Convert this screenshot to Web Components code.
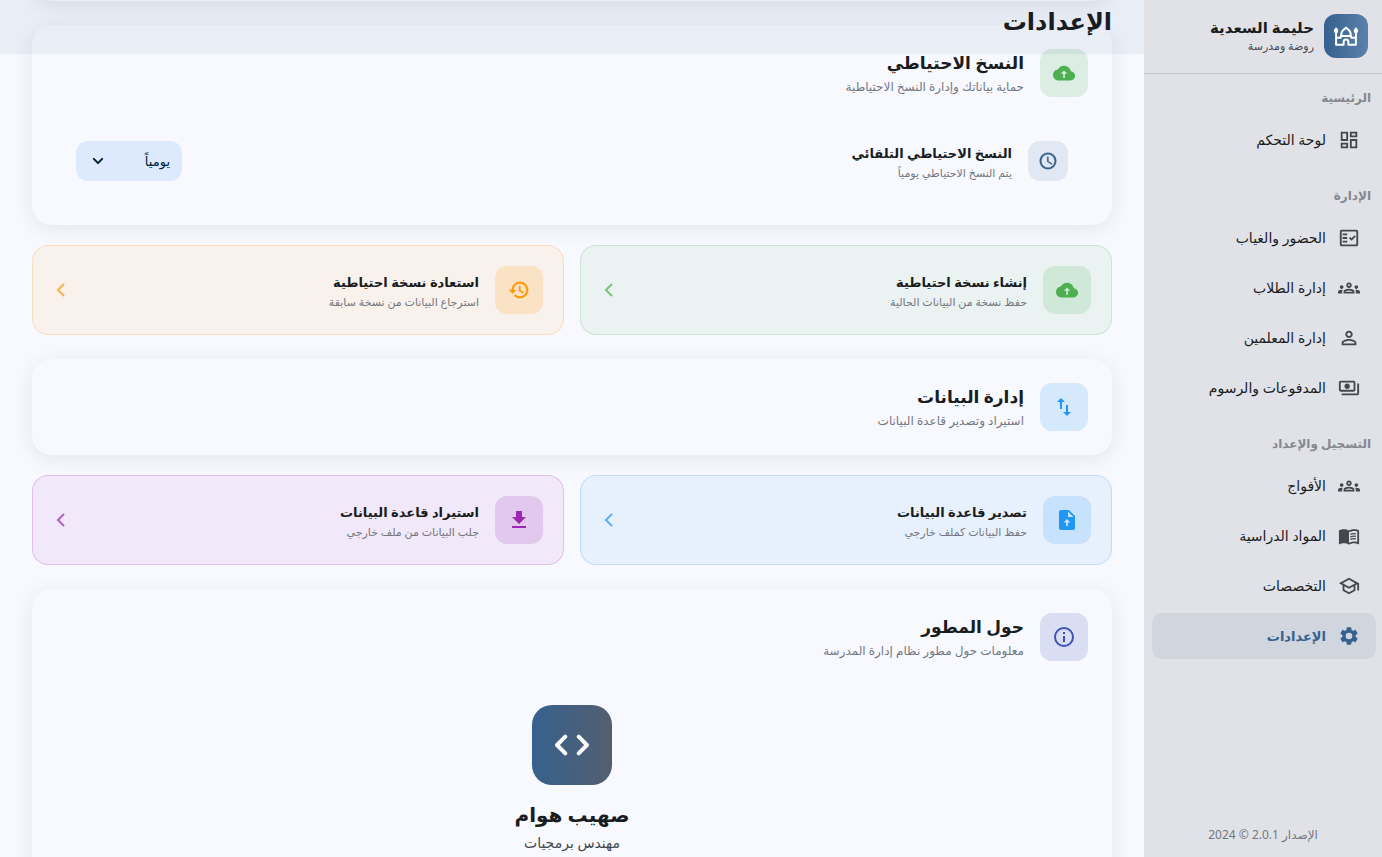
<!DOCTYPE html>
<html lang="ar" dir="rtl">
<head>
<meta charset="utf-8">
<meta name="viewport" content="width=device-width, initial-scale=1">
<title>الإعدادات</title>
<style>
  html, body { height: 100%; }
  body {
    margin: 0;
    overflow: hidden;
    background: #f8f9ff;
    color: #191c20;
    font-family: "Noto Sans", "DejaVu Sans", sans-serif;
    --primary: #36618e;
    --muted: #73777f;
    --green: #4caf50;
    --orange: #ff9800;
    --blue: #2196f3;
    --purple: #9c27b0;
    --indigo: #3f51b5;
  }
</style>
</head>
<body>

<school-app>
  <side-nav slot="side">
    <nav-group label="الرئيسية">
      <nav-item icon="dashboard">لوحة التحكم</nav-item>
    </nav-group>
    <nav-group label="الإدارة">
      <nav-item icon="check">الحضور والغياب</nav-item>
      <nav-item icon="groups">إدارة الطلاب</nav-item>
      <nav-item icon="person">إدارة المعلمين</nav-item>
      <nav-item icon="payments">المدفوعات والرسوم</nav-item>
    </nav-group>
    <nav-group label="التسجيل والإعداد">
      <nav-item icon="groups">الأفواج</nav-item>
      <nav-item icon="book">المواد الدراسية</nav-item>
      <nav-item icon="school">التخصصات</nav-item>
      <nav-item icon="settings" active>الإعدادات</nav-item>
    </nav-group>
  </side-nav>

  <page-bar slot="bar">الإعدادات</page-bar>

  <settings-card class="previous"></settings-card>

  <settings-card icon="cloud" titulo="النسخ الاحتياطي" sub="حماية بياناتك وإدارة النسخ الاحتياطية" style="--tint: var(--green)">
    <schedule-row></schedule-row>
  </settings-card>
  <action-grid>
    <action-card icon="cloud" titulo="إنشاء نسخة احتياطية" sub="حفظ نسخة من البيانات الحالية" style="--tint: var(--green)"></action-card>
    <action-card icon="history" titulo="استعادة نسخة احتياطية" sub="استرجاع البيانات من نسخة سابقة" style="--tint: var(--orange)"></action-card>
  </action-grid>

  <settings-card icon="swap" titulo="إدارة البيانات" sub="استيراد وتصدير قاعدة البيانات" style="--tint: var(--blue)"></settings-card>
  <action-grid>
    <action-card icon="upload" titulo="تصدير قاعدة البيانات" sub="حفظ البيانات كملف خارجي" style="--tint: var(--blue)"></action-card>
    <action-card icon="download" titulo="استيراد قاعدة البيانات" sub="جلب البيانات من ملف خارجي" style="--tint: var(--purple)"></action-card>
  </action-grid>

  <settings-card icon="info" titulo="حول المطور" sub="معلومات حول مطور نظام إدارة المدرسة" style="--tint: var(--indigo)">
    <developer-profile></developer-profile>
  </settings-card>
</school-app>

<script>
// all the icons use a 24x24 grid
const icons = {
  dashboard: '<path d="M19 5v2h-4V5h4M9 5v6H5V5h4m10 8v6h-4v-6h4M9 17v2H5v-2h4M21 3h-8v6h8V3zM11 3H3v10h8V3zm10 8h-8v10h8V11zm-10 4H3v6h8v-6z"/>',
  check: '<path d="M20 3H4c-1.1 0-2 .9-2 2v14c0 1.1.9 2 2 2h16c1.1 0 2-.9 2-2V5c0-1.1-.9-2-2-2zm0 16H4V5h16v14z"/><path d="M19.4 10.4 18 9l-3.2 3.2-1.4-1.4L12 12.2l2.8 2.8zM5 7h5v2H5zM5 11h5v2H5zM5 15h5v2H5z"/>',
  groups: '<path d="M4 13c1.1 0 2-.9 2-2s-.9-2-2-2-2 .9-2 2 .9 2 2 2zm1.13 1.1C4.76 14.04 4.39 14 4 14c-.99 0-1.93.21-2.78.58C.48 14.9 0 15.62 0 16.43V18h4.5v-1.61c0-.83.23-1.61.63-2.29zM20 13c1.1 0 2-.9 2-2s-.9-2-2-2-2 .9-2 2 .9 2 2 2zm4 3.43c0-.81-.48-1.53-1.22-1.85A6.95 6.95 0 0 0 20 14c-.39 0-.76.04-1.13.1.4.68.63 1.46.63 2.29V18H24v-1.57zm-7.76-2.78A9.06 9.06 0 0 0 12 12.75c-1.63 0-3.07.39-4.24.9A2.99 2.99 0 0 0 6 16.39V18h12v-1.61c0-1.18-.68-2.26-1.76-2.74zM8.07 16c.09-.23.13-.39.91-.69.97-.38 1.99-.56 3.02-.56s2.05.18 3.02.56c.77.3.81.46.91.69H8.07zM12 8c.55 0 1 .45 1 1s-.45 1-1 1-1-.45-1-1 .45-1 1-1m0-2c-1.66 0-3 1.34-3 3s1.34 3 3 3 3-1.34 3-3-1.34-3-3-3z"/>',
  person: '<path d="M12 6a2 2 0 1 1 0 4 2 2 0 0 1 0-4m0 9c2.7 0 5.8 1.29 6 2v1H6v-1c.2-.71 3.3-2 6-2m0-11C9.79 4 8 5.79 8 8s1.79 4 4 4 4-1.79 4-4-1.79-4-4-4zm0 9c-2.67 0-8 1.34-8 4v3h16v-3c0-2.66-5.33-4-8-4z"/>',
  payments: '<path d="M19 14V6c0-1.1-.9-2-2-2H3c-1.1 0-2 .9-2 2v8c0 1.1.9 2 2 2h14c1.1 0 2-.9 2-2zm-2 0H3V6h14v8zm-7-7c-1.66 0-3 1.34-3 3s1.34 3 3 3 3-1.34 3-3-1.34-3-3-3zm13 0v11c0 1.1-.9 2-2 2H4v-2h17V7h2z"/>',
  book: '<path d="M21 5c-1.11-.35-2.33-.5-3.5-.5-1.95 0-4.05.4-5.5 1.5-1.45-1.1-3.55-1.5-5.5-1.5S2.45 4.9 1 6v14.65c0 .25.25.5.5.5.1 0 .15-.05.25-.05C3.1 20.45 5.05 20 6.5 20c1.95 0 4.05.4 5.5 1.5 1.35-.85 3.8-1.5 5.5-1.5 1.65 0 3.35.3 4.75 1.05.1.05.15.05.25.05.25 0 .5-.25.5-.5V6c-.6-.45-1.25-.75-2-1zm0 13.5c-1.1-.35-2.3-.5-3.5-.5-1.7 0-4.15.65-5.5 1.5V8c1.35-.85 3.8-1.5 5.5-1.5 1.2 0 2.4.15 3.5.5v11.5z"/><path d="M13.5 10.3q3-1.3 6-.6M13.5 13q3-1.3 6-.6M13.5 15.7q3-1.3 6-.6" fill="none" stroke="currentColor" stroke-width="1.4"/>',
  school: '<path d="M12 3 1 9l4 2.18v6L12 21l7-3.82v-6l2-1.09V17h2V9L12 3zm6.82 6L12 12.72 5.18 9 12 5.28 18.82 9zM17 15.99l-5 2.73-5-2.73v-3.72L12 15l5-2.73v3.72z"/>',
  settings: '<path d="M19.14 12.94c.04-.3.06-.61.06-.94 0-.32-.02-.64-.07-.94l2.03-1.58c.18-.14.23-.41.12-.61l-1.92-3.32c-.12-.22-.37-.29-.59-.22l-2.39.96c-.5-.38-1.03-.7-1.62-.94l-.36-2.54c-.04-.24-.24-.41-.48-.41h-3.84c-.24 0-.43.17-.47.41l-.36 2.54c-.59.24-1.13.57-1.62.94l-2.39-.96c-.22-.08-.47 0-.59.22L2.74 8.87c-.12.21-.08.47.12.61l2.03 1.58c-.05.3-.09.63-.09.94s.02.64.07.94l-2.03 1.58c-.18.14-.23.41-.12.61l1.92 3.32c.12.22.37.29.59.22l2.39-.96c.5.38 1.03.7 1.62.94l.36 2.54c.05.24.24.41.48.41h3.84c.24 0 .44-.17.47-.41l.36-2.54c.59-.24 1.13-.56 1.62-.94l2.39.96c.22.08.47 0 .59-.22l1.92-3.32c.12-.22.07-.47-.12-.61l-2.01-1.58zM12 15.6a3.6 3.6 0 1 1 0-7.2 3.6 3.6 0 0 1 0 7.2z"/>',
  castle: '<path d="M3.5 8v11.5H10V17a2 2 0 0 1 4 0v2.500h6.500V8M3.500 13.500h4V12h9v1.500h4M8.200 12C6.800 8 10 7 12 4.800 14 7 17.200 8 15.800 12" fill="none" stroke="currentColor" stroke-width="1.700" stroke-linejoin="round"/><path d="M3.500 4.500q3 2.500 1.200 5H2.300q-1.800-2.500 1.200-5zM20.500 4.500q3 2.500 1.200 5h-2.400q-1.800-2.500 1.200-5z"/>',
  cloud: '<path transform="translate(1 1) scale(.92)" fill-rule="evenodd" d="M19.35 10.04C18.67 6.59 15.64 4 12 4 9.11 4 6.6 5.64 5.35 8.04 2.34 8.36 0 10.91 0 14c0 3.31 2.69 6 6 6h13c2.76 0 5-2.24 5-5 0-2.64-2.05-4.78-4.65-4.96zM12 9.300l3.500 3.500h-2.600V17h-1.800v-4.200H8.500z"/>',
  history: '<path transform="translate(1 1) scale(.92)" d="M13 3a9 9 0 0 0-9 9H1l3.89 3.89.07.14L9 12H6c0-3.87 3.13-7 7-7s7 3.13 7 7-3.13 7-7 7c-1.93 0-3.68-.79-4.94-2.06l-1.42 1.42A8.95 8.95 0 0 0 13 21a9 9 0 0 0 0-18zm-1 5v5l4.28 2.54.72-1.21-3.5-2.08V8H12z" stroke="currentColor" stroke-width=".4"/>',
  swap: '<path d="M16 17V10h-2v7h-3l4 4 4-4h-3zM9 3 5 7h3v7h2V7h3L9 3z"/>',
  upload: '<path fill-rule="evenodd" d="M14 2H6c-1.1 0-2 .9-2 2v16c0 1.1.9 2 2 2h12c1.1 0 2-.9 2-2V8l-6-6zm-1 7V3.5L18.5 9H13zM12 11l3.500 3.500h-2.600V18h-1.800v-3.500H8.500z"/>',
  download: '<path d="M15 9V3H9v6H5l7 7 7-7h-4zM5 18v2h14v-2H5z"/>',
  info: '<path d="M11 7h2v2h-2zm0 4h2v6h-2zm1-9a10 10 0 1 0 0 20 10 10 0 0 0 0-20zm0 18a8 8 0 1 1 0-16 8 8 0 0 1 0 16z"/>',
  clock: '<path d="M12 2a10 10 0 1 0 0 20 10 10 0 0 0 0-20zm0 18a8 8 0 1 1 0-16 8 8 0 0 1 0 16zm.5-13H11v6l5.25 3.15.75-1.23-4.5-2.67z" stroke="currentColor" stroke-width=".4"/>',
  code: '<path d="M8 7l-5 5 5 5M16 7l5 5-5 5" fill="none" stroke="currentColor" stroke-width="2.4" stroke-linecap="round" stroke-linejoin="round"/>',
  left: '<path d="M15 6l-6 6 6 6" fill="none" stroke="currentColor" stroke-width="2"/>',
  down: '<path d="M7 9.5l5 5 5-5" fill="none" stroke="currentColor" stroke-width="2.4" stroke-linecap="round" stroke-linejoin="round"/>'
};

// base class: each element only writes its own template
class BaseElement extends HTMLElement {
  constructor () {
    super();
    this.attachShadow({ mode: 'open' });
  }
  attr (name) {
    return this.getAttribute(name) || '';
  }
  render () {
    const template = document.createElement('template');
    template.innerHTML = this.getTemplate() + `<style>${this.getStyles()}</style>`;
    this.shadowRoot.appendChild(template.content.cloneNode(true));
  }
  connectedCallback () {
    if (!this.shadowRoot.firstChild) this.render();
  }
}

class UiIcon extends BaseElement {
  getTemplate () {
    return `<svg viewBox="0 0 24 24" fill="currentColor" aria-hidden="true">${icons[this.attr('name')]}</svg>`;
  }
  getStyles () {
    return `
      :host { display: block; flex: none; width: var(--size, 24px); height: var(--size, 24px); }
      svg { display: block; width: 100%; height: 100%; }
    `;
  }
}

// rounded square with an icon inside
class IconTile extends BaseElement {
  getTemplate () {
    return `<ui-icon name="${this.attr('name')}"></ui-icon>`;
  }
  getStyles () {
    return `
      :host {
        display: grid;
        place-items: center;
        flex: none;
        width: var(--tile, 48px);
        height: var(--tile, 48px);
        border-radius: 12px;
        color: var(--tint);
        background: color-mix(in srgb, var(--tint) var(--strength, 16%), transparent);
      }
    `;
  }
}

class SchoolApp extends BaseElement {
  getTemplate () {
    return `
      <slot name="side"></slot>
      <main>
        <slot name="bar"></slot>
        <div class="scroll"><slot></slot></div>
      </main>
    `;
  }
  getStyles () {
    return `
      :host { display: flex; height: 100vh; }
      main { position: relative; flex: 1; min-width: 0; }
      .scroll { height: 100%; overflow: hidden; padding: 0 32px; box-sizing: border-box; }
    `;
  }
}

class PageBar extends BaseElement {
  getTemplate () {
    return `<h1><slot></slot></h1>`;
  }
  getStyles () {
    return `
      :host {
        position: absolute;
        inset: 0 0 auto;
        z-index: 1;
        height: 54px;
        padding: 0 32px;
        background: rgba(54, 97, 142, .08);
      }
      h1 { margin: 0; font-size: 24px; line-height: 42px; font-weight: 700; }
    `;
  }
}

class SideNav extends BaseElement {
  getTemplate () {
    return `
      <header>
        <div class="logo"><ui-icon name="castle"></ui-icon></div>
        <div>
          <strong>حليمة السعدية</strong>
          <span>روضة ومدرسة</span>
        </div>
      </header>
      <nav><slot></slot></nav>
      <footer>الإصدار 2.0.1 © 2024</footer>
    `;
  }
  getStyles () {
    return `
      :host { display: flex; flex-direction: column; flex: none; width: 238px; background: #e1e2e8; }
      header { display: flex; align-items: center; gap: 10px; height: 71px; padding: 0 14px 2px; border-bottom: 1px solid #c3c6cf; }
      .logo {
        --size: 28px;
        display: grid; place-items: center;
        width: 44px; height: 44px;
        border-radius: 12px;
        color: #fff;
        background: linear-gradient(90deg, #36618e, #5a81ab);
      }
      strong { display: block; font-size: 15px; line-height: 20px; }
      span { display: block; font-size: 11px; line-height: 18px; color: #43474e; }
      nav { flex: 1; padding: 14px 6px 0 8px; }
      footer { padding: 0 0 12px; text-align: center; font-size: 12px; line-height: 20px; color: var(--muted); }
    `;
  }
}

class NavGroup extends BaseElement {
  getTemplate () {
    return `<h2>${this.attr('label')}</h2><slot></slot>`;
  }
  getStyles () {
    return `
      :host { display: flex; flex-direction: column; gap: 4px; margin-bottom: 23px; }
      h2 { margin: 0 5px 5px; font-size: 12px; line-height: 20px; font-weight: 700; color: #85888f; }
    `;
  }
}

class NavItem extends BaseElement {
  getTemplate () {
    return `<a href="#"><ui-icon name="${this.attr('icon')}"></ui-icon><slot></slot></a>`;
  }
  getStyles () {
    return `
      :host { display: block; }
      a {
        --size: 22px;
        display: flex; align-items: center; gap: 12px;
        height: 46px; padding: 0 16px;
        border-radius: 10px;
        font-size: 14px; line-height: 24px;
        color: inherit; text-decoration: none;
      }
      ui-icon { color: #43474e; }
      :host([active]) a { background: rgba(54, 97, 142, .1); color: var(--primary); font-size: 13px; font-weight: 700; }
      :host([active]) ui-icon { color: var(--primary); }
    `;
  }
}

class SettingsCard extends BaseElement {
  getTemplate () {
    if (!this.attr('titulo')) return '';
    return `
      <header>
        <icon-tile name="${this.attr('icon')}"></icon-tile>
        <div>
          <h2>${this.attr('titulo')}</h2>
          <p>${this.attr('sub')}</p>
        </div>
      </header>
      <slot></slot>
    `;
  }
  getStyles () {
    return `
      :host {
        display: block;
        margin-bottom: 20px;
        padding: 24px;
        border-radius: 20px;
        background: #f8f9ff;
        box-shadow: 0 4px 20px rgba(0, 0, 0, .08);
      }
      :host(.previous) { margin-top: -47px; margin-bottom: 24px; }
      header { display: flex; align-items: center; gap: 16px; }
      h2 { margin: 0; font-size: 17px; line-height: 28px; font-weight: 700; }
      p { margin: 0; font-size: 12px; line-height: 20px; color: var(--muted); }
    `;
  }
}

class ScheduleRow extends BaseElement {
  getTemplate () {
    return `
      <icon-tile name="clock"></icon-tile>
      <div class="text">
        <label for="every">النسخ الاحتياطي التلقائي</label>
        <p>يتم النسخ الاحتياطي يومياً</p>
      </div>
      <div class="select">
        <select id="every">
          <option>يومياً</option>
          <option>أسبوعياً</option>
          <option>شهرياً</option>
        </select>
        <ui-icon name="down"></ui-icon>
      </div>
    `;
  }
  getStyles () {
    return `
      :host { display: flex; align-items: center; gap: 16px; margin-top: 24px; padding: 20px; }
      icon-tile { --tint: var(--primary); --tile: 40px; --size: 20px; --strength: 11%; }
      .text { flex: 1; }
      label { display: block; font-size: 13px; line-height: 24px; font-weight: 700; }
      p { margin: 0; font-size: 11px; line-height: 16px; color: var(--muted); }
      .select { display: grid; align-items: center; color: #001d35; }
      select {
        grid-area: 1 / 1;
        appearance: none;
        width: 106px; height: 40px; padding: 0 12px;
        border: 0; border-radius: 12px;
        background: #dde9fd; color: inherit;
        font: 500 13px "Noto Sans", "DejaVu Sans", sans-serif;
      }
      .select ui-icon { --size: 20px; grid-area: 1 / 1; justify-self: end; margin-inline-end: 12px; pointer-events: none; }
    `;
  }
}

class ActionGrid extends BaseElement {
  getTemplate () {
    return `<slot></slot>`;
  }
  getStyles () {
    return `:host { display: grid; grid-template-columns: 1fr 1fr; gap: 16px; margin-bottom: 24px; }`;
  }
}

class ActionCard extends BaseElement {
  getTemplate () {
    return `
      <button type="button">
        <icon-tile name="${this.attr('icon')}"></icon-tile>
        <span class="text"><b>${this.attr('titulo')}</b><small>${this.attr('sub')}</small></span>
        <ui-icon class="go" name="left"></ui-icon>
      </button>
    `;
  }
  getStyles () {
    return `
      :host { display: block; }
      button {
        display: flex; align-items: center; gap: 16px;
        width: 100%; padding: 20px 20px 20px 16px;
        border: 1px solid color-mix(in srgb, var(--tint) 20%, transparent);
        border-radius: 16px;
        background: color-mix(in srgb, var(--tint) 8%, #f8f9ff);
        color: inherit; font: inherit; text-align: start;
      }
      .text { flex: 1; }
      b { display: block; font-size: 13px; line-height: 24px; }
      small { display: block; font-size: 11px; line-height: 16px; color: var(--muted); }
      .go { color: var(--tint); opacity: .7; }
    `;
  }
}

class DeveloperProfile extends BaseElement {
  getTemplate () {
    return `
      <div class="avatar"><ui-icon name="code"></ui-icon></div>
      <h3>صهيب هوام</h3>
      <p>مهندس برمجيات</p>
    `;
  }
  getStyles () {
    return `
      :host { display: flex; flex-direction: column; align-items: center; margin-top: 24px; padding: 20px; }
      .avatar {
        --size: 40px;
        display: grid; place-items: center;
        width: 80px; height: 80px;
        border-radius: 20px;
        color: #fff;
        background: linear-gradient(90deg, #36618e, #535f70);
      }
      h3 { margin: 14px 0 0; font-size: 20px; line-height: 32px; }
      p { margin: 0; font-size: 14px; line-height: 24px; color: #43474e; }
    `;
  }
}

customElements.define('ui-icon', UiIcon);
customElements.define('icon-tile', IconTile);
customElements.define('school-app', SchoolApp);
customElements.define('page-bar', PageBar);
customElements.define('side-nav', SideNav);
customElements.define('nav-group', NavGroup);
customElements.define('nav-item', NavItem);
customElements.define('settings-card', SettingsCard);
customElements.define('schedule-row', ScheduleRow);
customElements.define('action-grid', ActionGrid);
customElements.define('action-card', ActionCard);
customElements.define('developer-profile', DeveloperProfile);
</script>
</body>
</html>
